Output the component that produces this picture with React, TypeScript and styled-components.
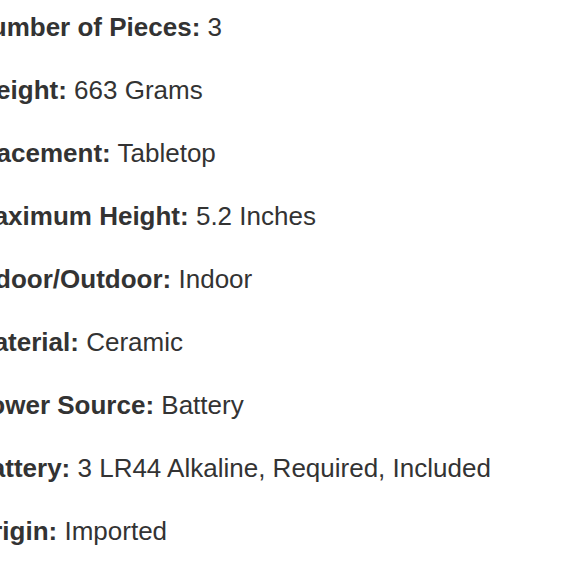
import React, { FC, memo } from "react";
import styled, { createGlobalStyle } from "styled-components";

interface ISpec {
  label: string;
  value: string;
}

const specs: ISpec[] = [
  { label: "Number of Pieces:", value: "3" },
  { label: "Weight:", value: "663 Grams" },
  { label: "Placement:", value: "Tabletop" },
  { label: "Maximum Height:", value: "5.2 Inches" },
  { label: "Indoor/Outdoor:", value: "Indoor" },
  { label: "Material:", value: "Ceramic" },
  { label: "Power Source:", value: "Battery" },
  { label: "Battery:", value: "3 LR44 Alkaline, Required, Included" },
  { label: "Origin:", value: "Imported" },
];

const _App: FC = () => (
  <>
    <GlobalStyle />
    <List>
      {specs.map(spec => (
        <Row key={spec.label}>
          <Label>{spec.label}</Label> {spec.value}
        </Row>
      ))}
    </List>
  </>
);

export default memo(_App);

const GlobalStyle = createGlobalStyle`
  html, body {
    margin: 0;
    background: #ffffff;
    overflow: hidden;
  }
`;

const List = styled.ul`
  display: flex;
  flex-direction: column;
  gap: 33px;
  list-style: none;
  margin: 0;
  padding: 12px 0 0 0;
  margin-left: -28px;
  font-family: "Liberation Sans", Arial, sans-serif;
  font-size: 26px;
  line-height: 30px;
  color: #333333;
`;

const Row = styled.li`
  white-space: nowrap;
`;

const Label = styled.b`
  font-weight: 700;
`;
